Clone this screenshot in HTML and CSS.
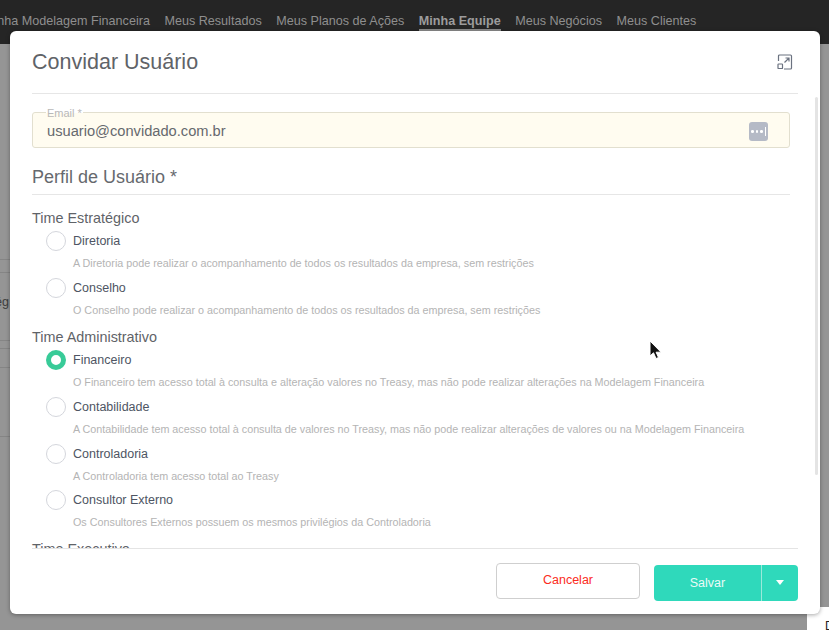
FILE: index.html
```html
<!DOCTYPE html>
<html lang="pt-BR">
<head>
<meta charset="utf-8">
<title>Convidar Usuário</title>
<link rel="stylesheet" href="styles.css">
</head>
<body>
<nav class="topbar">
  <a class="nav-item">Minha Modelagem Financeira</a>
  <a class="nav-item">Meus Resultados</a>
  <a class="nav-item">Meus Planos de Ações</a>
  <a class="nav-item active">Minha Equipe</a>
  <a class="nav-item">Meus Negócios</a>
  <a class="nav-item">Meus Clientes</a>
</nav>
<div class="bg-rows">
  <div class="bg-line l1"></div>
  <div class="bg-line l2"></div>
  <div class="bg-text">Estratég</div>
  <div class="bg-line l3"></div>
  <div class="bg-line l4"></div>
  <div class="bg-line l5"></div>
  <div class="bg-line l6"></div>
</div>
<div class="corner-card"><span>D</span></div>
<section class="modal">
  <header class="modal-head">
    <h1>Convidar Usuário</h1>
    <svg class="expand" width="16" height="16" viewBox="0 0 16 16" fill="none" stroke="#6b7280" stroke-width="1.2">
      <path d="M1.500 7V2a1 1 0 0 1 1-1h11a1 1 0 0 1 1 1v12a1 1 0 0 1-1 1H7"/>
      <rect x="1" y="10" width="4.500" height="4.500" rx=".6"/>
      <path d="M7.500 8.500 12 4M8.500 4H12V7.500"/>
    </svg>
  </header>
  <div class="modal-body">
    <div class="scrollbar"></div>
    <div class="content">
      <div class="field">
        <label>Email *</label>
        <span class="value">usuario@convidado.com.br</span>
        <span class="pw-key"><i></i><i></i><i></i><b></b></span>
      </div>
      <h2>Perfil de Usuário *</h2>
      <h3 class="first">Time Estratégico</h3>
      <div class="group">
        <div class="opt"><span class="radio"></span><div><div class="name">Diretoria</div><p>A Diretoria pode realizar o acompanhamento de todos os resultados da empresa, sem restrições</p></div></div>
        <div class="opt"><span class="radio"></span><div><div class="name">Conselho</div><p>O Conselho pode realizar o acompanhamento de todos os resultados da empresa, sem restrições</p></div></div>
      </div>
      <h3>Time Administrativo</h3>
      <div class="group">
        <div class="opt"><span class="radio on"></span><div><div class="name">Financeiro</div><p>O Financeiro tem acesso total à consulta e alteração valores no Treasy, mas não pode realizar alterações na Modelagem Financeira</p></div></div>
        <div class="opt"><span class="radio"></span><div><div class="name">Contabilidade</div><p>A Contabilidade tem acesso total à consulta de valores no Treasy, mas não pode realizar alterações de valores ou na Modelagem Financeira</p></div></div>
        <div class="opt"><span class="radio"></span><div><div class="name">Controladoria</div><p>A Controladoria tem acesso total ao Treasy</p></div></div>
        <div class="opt"><span class="radio"></span><div><div class="name">Consultor Externo</div><p>Os Consultores Externos possuem os mesmos privilégios da Controladoria</p></div></div>
      </div>
      <h3 class="last">Time Executivo</h3>
    </div>
  </div>
  <footer class="modal-foot">
    <button class="btn-cancel">Cancelar</button>
    <div class="btn-save"><span class="save-label">Salvar</span><span class="save-arrow"></span></div>
  </footer>
</section>
<svg class="cursor" width="14" height="22" viewBox="0 0 14 22">
  <path d="M1 1v15l3.500-3.200L7 18.500l2.500-1-2.400-5.300H12z" fill="#111" stroke="#fff" stroke-width="1"/>
</svg>
</body>
</html>
```

FILE: styles.css
```css
* { box-sizing: border-box; }
html, body { margin: 0; height: 100%; }
body {
  position: relative;
  height: 630px;
  overflow: hidden;
  background: #959595;
  font-family: "Liberation Sans", Arial, sans-serif;
}
.topbar {
  height: 44px;
  background: #252525;
  display: flex;
  gap: 14.500px;
  padding: 14px 0 0 0;
  margin-left: -16px;
  white-space: nowrap;
  font-size: 12.600px;
  color: #8f8f8f;
}
.nav-item { height: 17px; line-height: 15px; }
.nav-item.active { font-weight: 700; color: #9c9c9c; border-bottom: 2px solid #8a8a8a; }
.bg-line { position: absolute; left: 0; width: 10px; height: 1px; background: #858585; }
.l1 { top: 259px; } .l2 { top: 272px; } .l3 { top: 340px; } .l4 { top: 348px; } .l5 { top: 367px; } .l6 { top: 436px; }
.bg-text { position: absolute; top: 295px; right: 820px; font-size: 12.600px; color: #3e3e3e; white-space: nowrap; line-height: 15px; }
.corner-card {
  position: absolute;
  left: 807px; top: 607px;
  width: 40px; height: 40px;
  background: #fff;
  border-radius: 6px;
  padding: 12px 0 0 18px;
  font-size: 12px;
  color: #222;
  line-height: 14px;
}
.modal {
  position: absolute;
  left: 10px; top: 31px;
  width: 810px; height: 583px;
  background: #fff;
  border-radius: 6px;
  box-shadow: 0 1px 4px rgba(0,0,0,.35);
  display: flex;
  flex-direction: column;
}
.modal-head {
  margin: 0 22px;
  height: 63px;
  flex: none;
  border-bottom: 1px solid #e6e6e6;
  display: flex;
  align-items: center;
  justify-content: space-between;
  padding: 0 5px 0 0;
}
h1 { margin: 0; font-size: 21.500px; font-weight: 400; color: #5f6368; line-height: 26px; }
.expand { margin-top: -1px; }
.modal-body { position: relative; flex: 1; min-height: 0; overflow: hidden; }
.scrollbar { position: absolute; left: 805px; top: 3px; width: 3px; height: 378px; background: #e4e4e4; border-radius: 2px; }
.content { padding: 18px 30px 0 22px; }
.field {
  position: relative;
  height: 36px;
  background: #fffcf0;
  border: 1px solid #e2dfcf;
  border-radius: 3px;
  padding: 9px 0 0 14px;
}
.field label {
  position: absolute;
  left: 13px; top: -6px;
  background: linear-gradient(#fff 50%, #fffcf0 50%);
  padding: 0 1px;
  font-size: 11px;
  line-height: 13px;
  color: #b8b8b8;
}
.value { display: block; font-size: 14.660px; line-height: 18px; color: #66696e; }
.pw-key {
  position: absolute;
  right: 21px; top: 9px;
  width: 19px; height: 19px;
  background: #b5bac6;
  border-radius: 3px;
  display: flex;
  align-items: center;
  gap: 2px;
  padding-left: 2px;
}
.pw-key i { width: 2.500px; height: 2.500px; border-radius: 50%; background: #fff; }
.pw-key b { width: 1px; height: 9px; background: #fff; }
h2 {
  margin: 18px 0 0;
  height: 29px;
  padding-top: 1px;
  border-bottom: 1px solid #e6e6e6;
  font-size: 18px;
  font-weight: 400;
  line-height: 20px;
  color: #66696e;
}
h3 { margin: 7px 0 0; font-size: 14.400px; font-weight: 400; line-height: 17px; color: #5f6368; height: 17px; }
h3.first { margin-top: 15px; }
h3.last { margin-top: 6px; }
.group { padding-top: 2px; }
.opt { display: flex; gap: 7px; padding-left: 14px; height: 46.670px; }
.radio {
  flex: none;
  width: 20px; height: 20px;
  margin-top: 2px;
  border: 1px solid #d4d6dc;
  border-radius: 50%;
  background: #fff;
}
.radio.on { border: 5.500px solid #38cb98; }
.name { font-size: 12.500px; line-height: 15px; color: #4e5563; margin-top: 5px; }
.opt p { margin: 8px 0 0; font-size: 10.780px; line-height: 13px; color: #b4b4b4; white-space: nowrap; }
.modal-foot {
  flex: none;
  margin: 0 22px;
  height: 66px;
  background: #fff;
  border-top: 1px solid #e4e4e4;
  display: flex;
  justify-content: flex-end;
  align-items: flex-start;
  gap: 14px;
  padding-top: 14px;
}
.btn-cancel {
  width: 144px; height: 36px;
  background: #fff;
  border: 1px solid #cfcfcf;
  border-radius: 4px;
  color: #fb2b22;
  font: 12.500px "Liberation Sans", Arial, sans-serif;
  padding: 0 0 2px;
}
.btn-save {
  width: 144px; height: 36px;
  margin-top: 2px;
  background: #2fd9bb;
  border-radius: 4px;
  display: flex;
  color: #eafbf7;
  font-size: 12.500px;
}
.save-label { width: 108px; text-align: center; line-height: 36px; border-right: 1px solid #9be9da; }
.save-arrow { position: relative; flex: 1; }
.save-arrow::after {
  content: "";
  position: absolute;
  left: 14px; top: 15px;
  border: 4.500px solid transparent;
  border-top: 5px solid #fff;
  border-bottom: 0;
}
.cursor { position: absolute; left: 649px; top: 340px; }
```
